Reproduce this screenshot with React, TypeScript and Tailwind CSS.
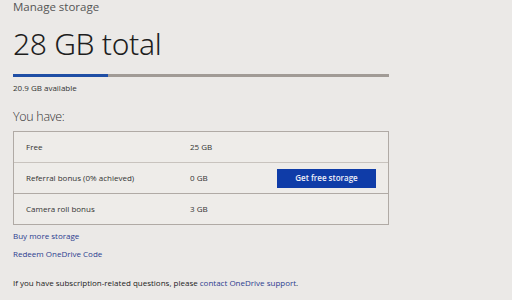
export default function App() {
  const font = { fontFamily: '"Open Sans", "Noto Sans", sans-serif' };
  return (
    <div className="w-[512px] h-[300px] overflow-hidden bg-[#ebe9e7] text-[#222]" style={font}>
      <div className="pl-[13px] w-[389px]">
        <div className="text-[11.5px] leading-[16px] text-[#555] mt-[-1px]">Manage storage</div>
        <div
          className="text-[30px] leading-[36px] font-light tracking-[-0.3px] text-[#1e1e1e] mt-[11px]"
          style={{ fontFamily: '"Noto Sans", "Open Sans", sans-serif' }}
        >
          28 GB total
        </div>
        <div className="mt-[12px] h-[3px] bg-[#a19b96] flex">
          <div className="w-[95px] h-full bg-[#1f4ea5]" />
        </div>
        <div className="text-[8px] leading-[12px] text-[#333] mt-[5px]">20.9 GB available</div>
        <div className="text-[12.5px] leading-[16px] font-light tracking-[-0.3px] text-[#333] mt-[15px]">You have:</div>
        <div className="mt-[6px] border border-[#b0aaa5] bg-[#eeece9] text-[8px] text-[#333]">
          <div className="h-[31px] flex items-center border-b border-[#c8c3be]">
            <div className="pl-[12px] w-[176px]">Free</div>
            <div>25 GB</div>
          </div>
          <div className="h-[31px] flex items-center border-b border-[#b0aaa5]">
            <div className="pl-[12px] w-[176px]">Referral bonus (0% achieved)</div>
            <div className="w-[87px]">0 GB</div>
            <div className="w-[99px] h-[19px] bg-[#0f3ca8] text-[#f0f0f8] font-semibold text-[8px] flex items-center justify-center">
              Get free storage
            </div>
          </div>
          <div className="h-[30px] flex items-center">
            <div className="pl-[12px] w-[176px]">Camera roll bonus</div>
            <div>3 GB</div>
          </div>
        </div>
        <div className="mt-[5px] text-[8px] leading-[12px] text-[#2b3d8f]">Buy more storage</div>
        <div className="mt-[6px] text-[8px] leading-[12px] text-[#2b3d8f]">Redeem OneDrive Code</div>
        <div className="mt-[17px] text-[8px] leading-[12px] text-[#222] whitespace-nowrap">
          If you have subscription-related questions, please <span className="text-[#2b3d8f]">contact OneDrive support</span>.
        </div>
      </div>
    </div>
  );
}
